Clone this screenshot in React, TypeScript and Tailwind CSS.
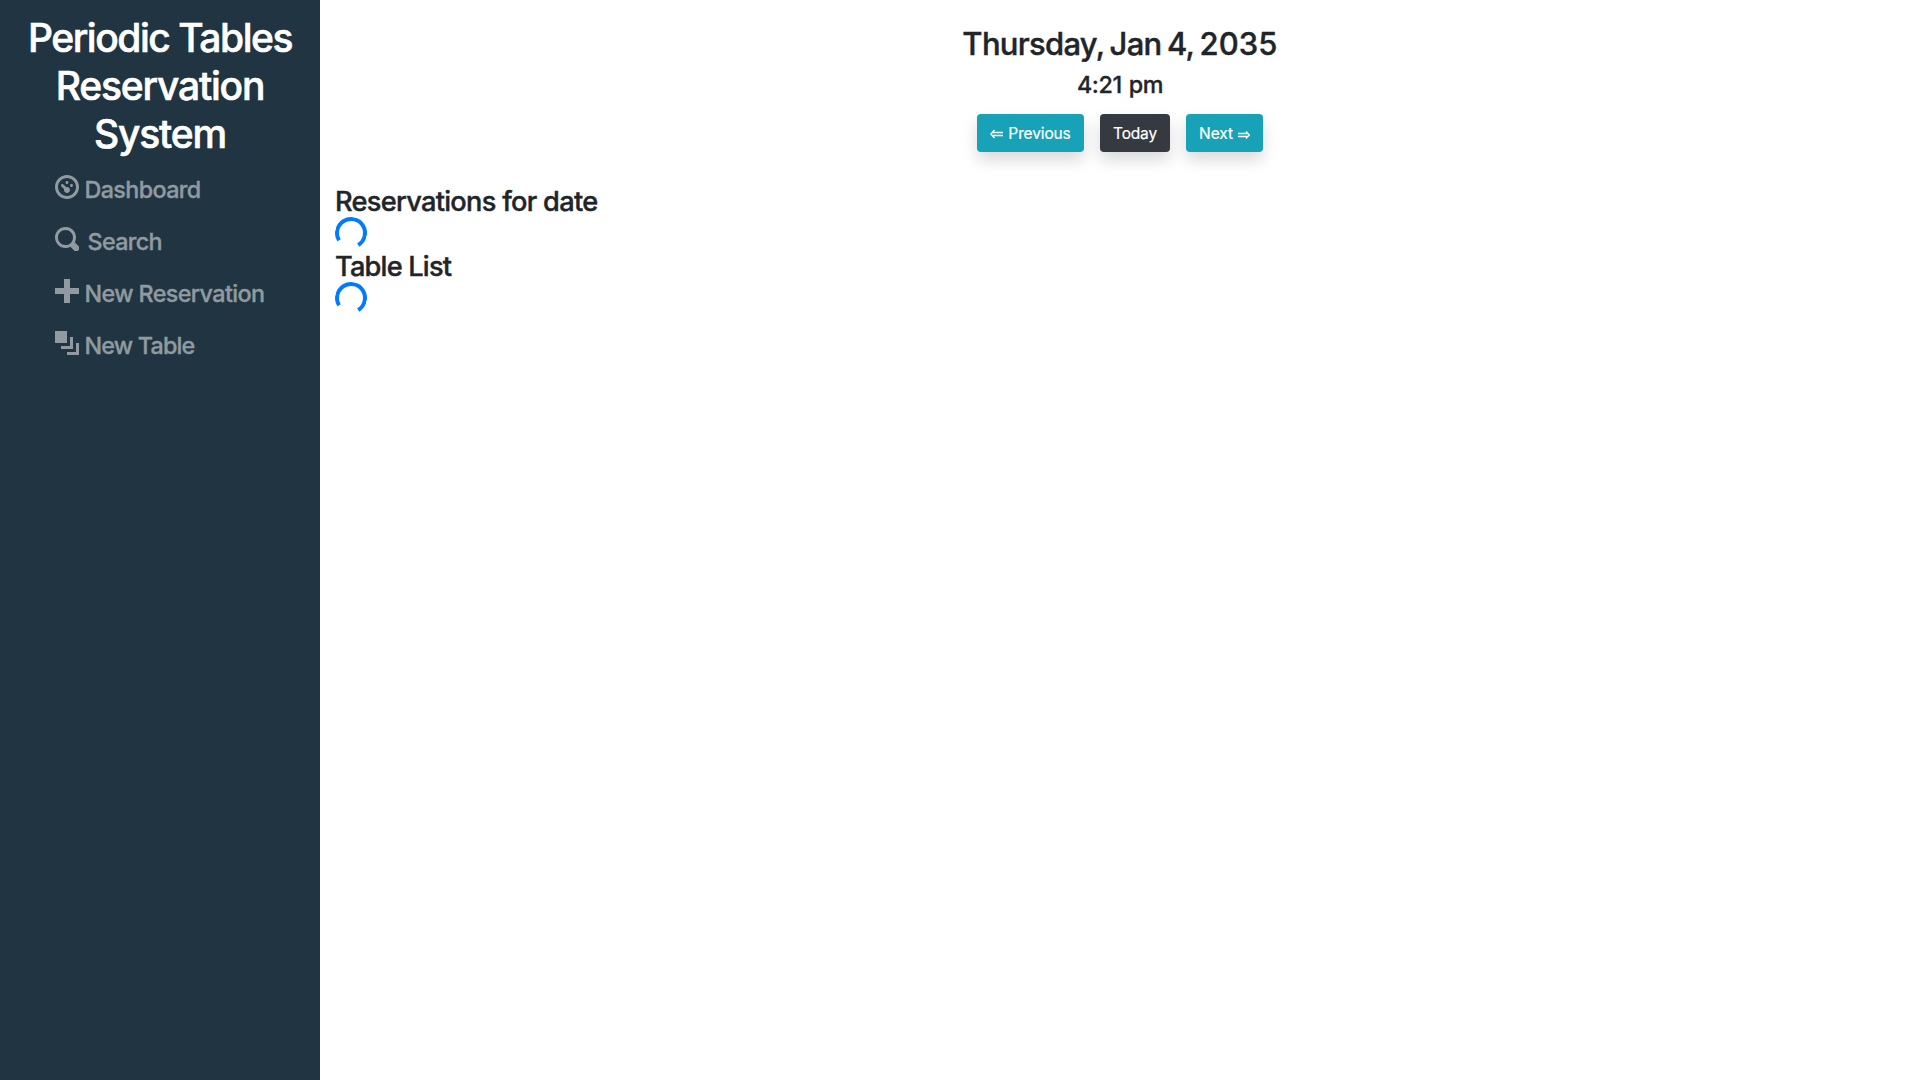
import type { ReactNode } from "react";

const iconPaths = {
  dashboard:
    "M4 0c-2.2 0-4 1.8-4 4s1.8 4 4 4 4-1.8 4-4-1.8-4-4-4zm0 1c1.66 0 3 1.34 3 3s-1.34 3-3 3-3-1.34-3-3 1.34-3 3-3zm0 1c-.28 0-.5.22-.5.5s.22.5.5.5.5-.22.5-.5-.22-.5-.5-.5zm-1.66 1a.5.5 0 0 0-.19.84l.91.91c-.02.08-.06.16-.06.25 0 .55.45 1 1 1s1-.45 1-1-.45-1-1-1c-.09 0-.17.04-.25.06l-.91-.91a.5.5 0 0 0-.44-.16.5.5 0 0 0-.06 0zm3.16 0c-.28 0-.5.22-.5.5s.22.5.5.5.5-.22.5-.5-.22-.5-.5-.5z",
  search:
    "M3.5 0c-1.93 0-3.5 1.57-3.5 3.5s1.57 3.5 3.5 3.5c.59 0 1.17-.14 1.66-.41a1 1 0 0 0 .13.13l1 1a1.02 1.02 0 1 0 1.44-1.44l-1-1a1 1 0 0 0-.16-.13c.27-.49.44-1.06.44-1.66 0-1.93-1.55-3.5-3.5-3.5zm0 1c1.39 0 2.5 1.11 2.5 2.5 0 .66-.24 1.27-.66 1.72-.01.01-.02.02-.03.03a1 1 0 0 0-.13.13c-.44.4-1.04.63-1.69.63-1.39 0-2.5-1.11-2.5-2.5s1.11-2.5 2.5-2.5z",
  plus: "M3 0v3h-3v2h3v3h2v-3h3v-2h-3v-3h-2z",
  layers: "M0 0v4h4v-4h-4zm5 2v3h-3v1h4v-4h-1zm2 2v3h-3v1h4v-4h-1z",
};

function NavItem({ icon, className, children }: { icon: keyof typeof iconPaths; className: string; children: ReactNode }) {
  return (
    <li className="h-[52px]">
      <a href="#" className="flex items-start text-[#909aa0]">
        <svg viewBox="0 0 8 8" className="size-6 shrink-0 fill-current">
          <path d={iconPaths[icon]} />
        </svg>
        <span className={`pt-px text-[23.3px] leading-7 font-medium whitespace-nowrap [-webkit-text-stroke:0.35px] ${className}`}>
          {children}
        </span>
      </a>
    </li>
  );
}

function Spinner() {
  return <div className="size-8 rotate-[14deg] rounded-full border-4 border-[#007bff] border-b-transparent" />;
}

const button =
  "flex h-[38px] items-center justify-center rounded-[4px] pt-px text-[15.5px] text-white shadow-[0_8px_16px_rgba(0,0,0,0.15)] whitespace-nowrap [-webkit-text-stroke:0.2px]";

export default function App() {
  return (
    <div className="flex h-[1080px] w-full overflow-hidden bg-white font-['Inter',sans-serif] text-[#212529]">
      <nav className="w-80 shrink-0 bg-[#203541]">
        <h1 className="pt-[14px] text-center text-[39px] leading-[48px] font-medium text-white [-webkit-text-stroke:0.6px]">
          <span className="block tracking-[-1.47px]">Periodic Tables</span>
          <span className="block tracking-[-1.2px]">Reservation</span>
          <span className="block tracking-[-1.2px]">System</span>
        </h1>
        <ul className="mt-[17px] pl-[55px]">
          <NavItem icon="dashboard" className="ml-[5.5px] tracking-[-0.6px]">Dashboard</NavItem>
          <NavItem icon="search" className="ml-[8.5px] tracking-[-0.65px]">Search</NavItem>
          <NavItem icon="plus" className="ml-[5.5px] tracking-[-0.6px]">New Reservation</NavItem>
          <NavItem icon="layers" className="ml-[5.5px] tracking-[-0.8px]">New Table</NavItem>
        </ul>
      </nav>
      <main className="flex-1 px-[15px]">
        <header className="flex flex-col items-center pt-[25px]">
          <h2 className="text-[31px] leading-[38px] font-medium tracking-[-0.72px] [word-spacing:-2px] [-webkit-text-stroke:0.4px]">
            Thursday, Jan 4, <span className="tracking-[0.1px]">2035</span>
          </h2>
          <h3 className="mt-2 text-[23.3px] leading-7 font-medium tracking-[-0.35px] [word-spacing:1px] [-webkit-text-stroke:0.3px]">4:21 pm</h3>
          <div className="mt-[15px] flex gap-4">
            <button className={`${button} w-[107px] bg-[#17a2b8] tracking-[-0.13px]`}>
              <svg viewBox="0 0 13 10" className="mr-[5px] h-[10px] w-[13px] fill-none stroke-white stroke-[1.3]" aria-label="⇐">
                <path d="M4.5 1 .8 5l3.7 4M2.6 3.5H13M2.6 6.5H13" />
              </svg>
              Previous
            </button>
            <button className={`${button} w-[70px] bg-[#343a40] tracking-[-0.15px]`}>Today</button>
            <button className={`${button} w-[77px] bg-[#17a2b8] tracking-[-0.1px]`}>
              Next
              <svg viewBox="0 0 12 8" className="mt-[3px] ml-[5px] h-2 w-3 fill-none stroke-white stroke-[1.3]" aria-label="⇒">
                <path d="M8 .5 11.3 4 8 7.5M0 2.5h9.8M0 5.5h9.8" />
              </svg>
            </button>
          </div>
        </header>
        <section className="mt-8 [-webkit-text-stroke:0.4px]">
          <h4 className="h-[33px] pt-px text-[27.2px] leading-[33px] font-medium tracking-[-0.71px]">Reservations for date</h4>
          <Spinner />
          <h4 className="h-[33px] pt-px text-[27.2px] leading-[33px] font-medium tracking-[-0.8px]">Table List</h4>
          <Spinner />
        </section>
      </main>
    </div>
  );
}
